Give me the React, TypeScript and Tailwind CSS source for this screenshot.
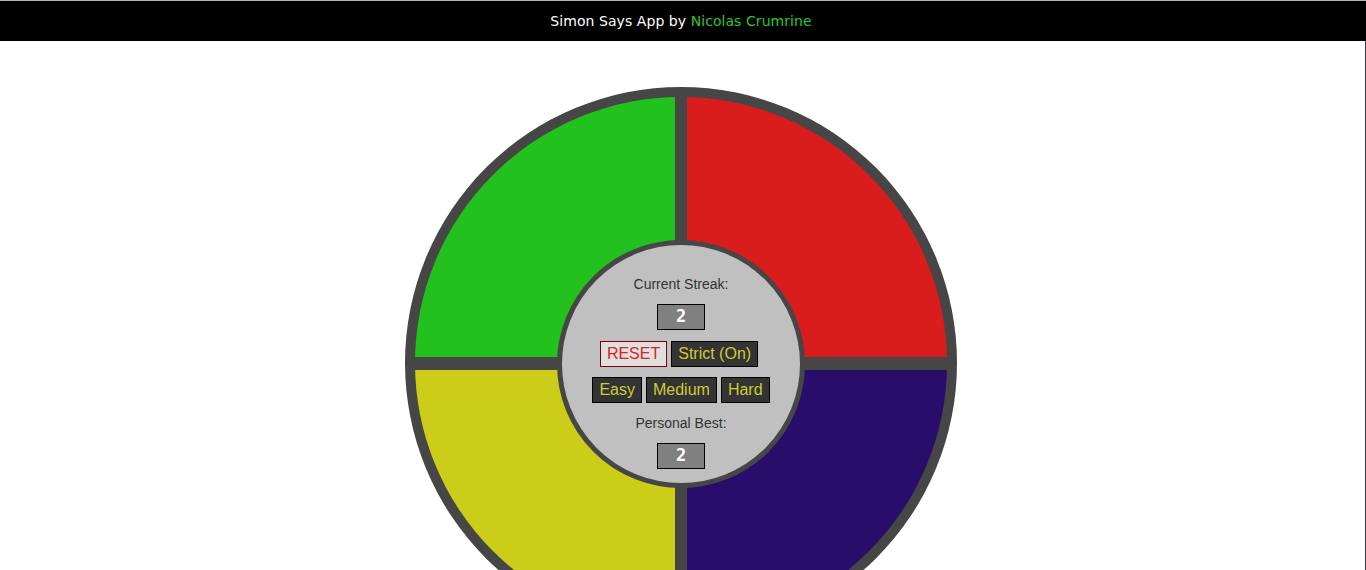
import React from 'react';

const BTN = 'border border-black bg-[#333333] text-[#cccc33] px-[6px] h-[26px] text-[16px] leading-[22px]';

const ScoreBox: React.FC<{ value: number }> = ({ value }) => (
  <div className="w-[48px] h-[26px] border border-black bg-[#808080] flex items-center justify-center text-white font-['DejaVu_Sans_Mono',monospace] font-bold text-[17px]">
    {value}
  </div>
);

const App: React.FC = () => {
  return (
    <div className="min-h-screen bg-white font-['Liberation_Sans',Arial,sans-serif] flex flex-col">
      {/* HEADER */}
      <header className="h-[41px] bg-black border-t border-[#b4b4b4] flex items-center justify-center pr-[4px]">
        <p className="font-['DejaVu_Sans',Verdana,sans-serif] text-[14px] tracking-[0.06px] text-white">
          Simon Says App by <span className="text-[#2ec62e]">Nicolas Crumrine</span>
        </p>
      </header>

      <div className="flex flex-1">
        <main className="flex-1 flex justify-center pt-[46px] pr-[3px] overflow-hidden h-[529px]">
          {/* BOARD */}
          <div className="relative w-[552px] h-[552px] shrink-0 rounded-full bg-[#464646] p-[10px]">
            <div className="w-full h-full rounded-full overflow-hidden grid grid-cols-2 grid-rows-2 gap-x-[12px] gap-y-[13px]">
              <div className="bg-[#23c11d]" />
              <div className="bg-[#d91c1c]" />
              <div className="bg-[#cbcd18]" />
              <div className="bg-[#290d6a]" />
            </div>

            {/* CENTER PANEL */}
            <div className="absolute top-[153px] left-1/2 -translate-x-1/2 w-[248px] h-[248px] rounded-full border-[5px] border-[#464646] bg-[#c0c0c0] flex flex-col items-center pt-[31px]">
              <span className="text-[14px] leading-[16px] text-[#333333]">Current Streak:</span>
              <div className="mt-[12px]">
                <ScoreBox value={2} />
              </div>
              <div className="flex gap-[4px] mt-[11px] pr-[4px]">
                <button className="border border-[#800000] bg-[#e0e0e0] text-[#dd2222] px-[6px] h-[26px] text-[16px] leading-[22px]">RESET</button>
                <button className={BTN}>Strict (On)</button>
              </div>
              <div className="flex gap-[4px] mt-[10px]">
                <button className={BTN}>Easy</button>
                <button className={BTN}>Medium</button>
                <button className={BTN}>Hard</button>
              </div>
              <span className="mt-[12px] text-[14px] leading-[16px] text-[#333333]">Personal Best:</span>
              <div className="mt-[12px]">
                <ScoreBox value={2} />
              </div>
            </div>
          </div>
        </main>
        <div className="w-[1px] bg-[#3d2e5c]" />
      </div>
    </div>
  );
};

export default App;
